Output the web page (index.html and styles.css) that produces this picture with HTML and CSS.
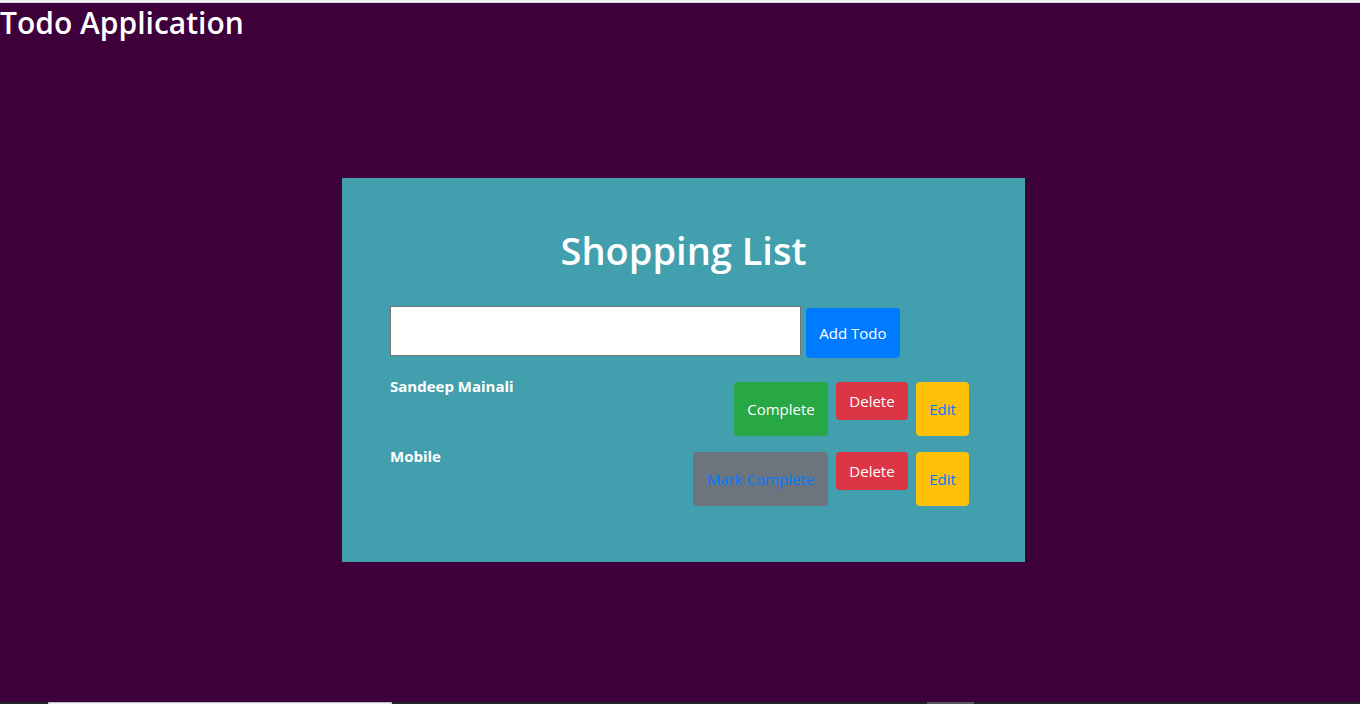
FILE: index.html
```html
<!DOCTYPE html>
<html lang="en">
<head>
<meta charset="utf-8">
<meta name="viewport" content="width=device-width, initial-scale=1">
<title>Todo Application</title>
<link rel="stylesheet" href="styles.css">
</head>
<body>
<header class="header">
  <h1 class="app-title">Todo Application</h1>
</header>
<main class="main">
  <section class="card">
    <h2 class="card-title">Shopping List</h2>
    <form class="add-form">
      <input class="todo-input" type="text" aria-label="New todo">
      <button class="btn btn-primary" type="button">Add Todo</button>
    </form>
    <ul class="todos">
      <li class="todo">
        <strong class="todo-name">Sandeep Mainali</strong>
        <button class="btn btn-success" type="button">Complete</button>
        <button class="btn btn-danger" type="button">Delete</button>
        <a class="btn btn-warning" href="#">Edit</a>
      </li>
      <li class="todo">
        <strong class="todo-name">Mobile</strong>
        <a class="btn btn-secondary" href="#">Mark Complete</a>
        <button class="btn btn-danger" type="button">Delete</button>
        <a class="btn btn-warning" href="#">Edit</a>
      </li>
    </ul>
  </section>
</main>
<footer class="taskbar">
  <div class="taskbar-search"></div>
  <div class="taskbar-active"></div>
</footer>
</body>
</html>
```

FILE: styles.css
```css
* {
  box-sizing: border-box;
}

body {
  display: flex;
  flex-direction: column;
  min-height: 100vh;
  margin: 0;
  background: #3d003b;
  color: #fff;
  font: 15px/24px "Segoe UI", "Open Sans", "Noto Sans", sans-serif;
}

.header {
  border-top: 2px solid #f1f3f4;
}

.app-title {
  margin: 0;
  border-top: 1px solid #dadce0;
  font-size: 30px;
  line-height: 40px;
  font-weight: 600;
}

.main {
  display: flex;
  flex: 1;
  align-items: center;
  justify-content: center;
  padding: 0 0 5px 7px;
}

.card {
  width: 683px;
  max-width: 100%;
  padding: 48px;
  background: #429fad;
}

.card-title {
  margin: 0 0 32px;
  font-size: 38px;
  line-height: 48px;
  font-weight: 600;
  text-align: center;
}

.add-form {
  display: flex;
  align-items: flex-end;
  gap: 5px;
  margin: 0 0 24px;
}

.todo-input {
  width: 70%;
  height: 50px;
  margin: 0 0 2px;
  padding: 0 8px;
  border: 1px solid #767676;
  background: #fff;
  font: inherit;
}

.todos {
  margin: 0;
  padding: 0;
  list-style: none;
}

.todo {
  display: flex;
  align-items: flex-start;
  gap: 8px;
  padding: 0 8px 16px 0;
}

.todo:last-child {
  padding-bottom: 8px;
}

.todo-name {
  flex: 1;
  margin-top: -8px;
  font-weight: 700;
}

.btn {
  display: flex;
  align-items: center;
  justify-content: center;
  height: 54px;
  padding: 0 12px;
  border: 0;
  border-radius: 4px;
  color: #fff;
  font: inherit;
  text-decoration: none;
  white-space: nowrap;
}

.btn-primary {
  width: 94px;
  height: 50px;
  background: #007bff;
}

.btn-success {
  width: 94px;
  background: #28a745;
}

.btn-danger {
  width: 72px;
  height: 38px;
  background: #dc3545;
}

.btn-warning {
  width: 53px;
  background: #ffc107;
  color: #007bff;
}

.btn-secondary {
  width: 135px;
  background: #6c757d;
  color: #007bff;
}

.taskbar {
  display: flex;
  height: 2px;
  padding: 0 386px 0 48px;
  justify-content: space-between;
  background: #22262b;
}

.taskbar-search {
  width: 344px;
  border: 1px solid #b9bcbf;
  border-bottom: 0;
  background: #f3f3f3;
}

.taskbar-active {
  width: 47px;
  background: #54595d;
}
```
